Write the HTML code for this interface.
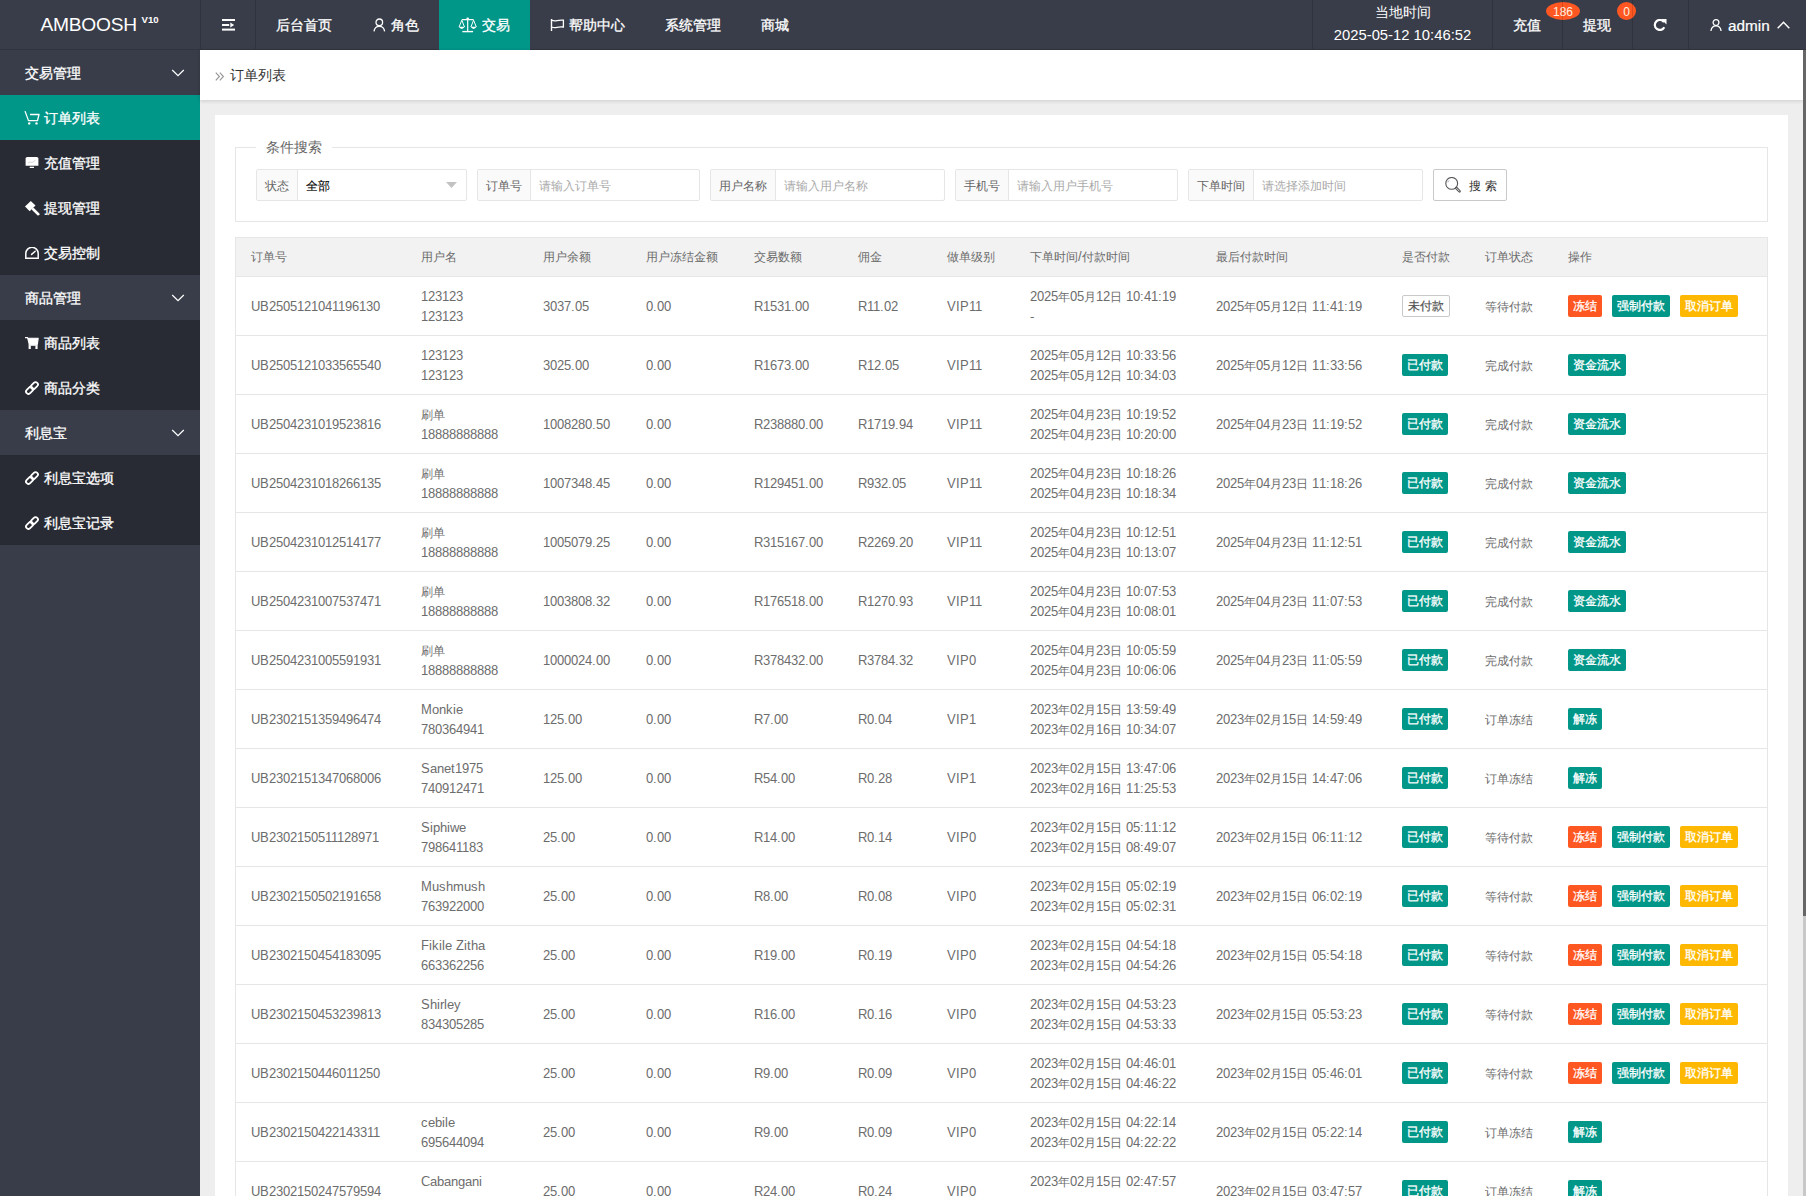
<!DOCTYPE html>
<html lang="zh"><head><meta charset="utf-8"><title>订单列表</title>
<style>
@font-face{font-family:"LSA";src:local("Liberation Sans"),local("LiberationSans");size-adjust:106%}
*{margin:0;padding:0;box-sizing:border-box}
html,body{width:1806px;height:1196px;overflow:hidden}
body{position:relative;background:#eeeeee;font-family:"LSA","Liberation Sans",sans-serif;font-size:14px;color:#666}
.abs{position:absolute;white-space:nowrap}
svg{display:block}
/* header */
.hd{position:absolute;left:0;top:0;width:1806px;height:50px;background:#393d49;border-bottom:1px solid #30343e}
.logo{position:absolute;left:0;top:0;width:200px;height:50px}
.logo .t{position:absolute;left:40.5px;top:12.5px;font-family:"Liberation Sans",sans-serif;font-size:19.2px;letter-spacing:-0.25px;color:#fff;line-height:24px}
.logo .v{position:absolute;left:141.5px;top:14px;font-family:"Liberation Sans",sans-serif;font-size:9.6px;font-weight:bold;color:#fff;line-height:11px}
.sep{position:absolute;top:0;width:1px;height:49px;background:rgba(0,0,0,.15);z-index:3}
.nv{position:absolute;top:0;height:50px;line-height:50px;color:#fff;font-size:14px;-webkit-text-stroke:0.3px #fff}
.nv.act{background:#009688}
.nv .ic{position:absolute;top:18px}
/* sidebar */
.sd{position:absolute;left:0;top:50px;width:200px;height:1146px;background:#393d49}
.it{position:absolute;left:0;width:200px;height:45px;line-height:46px;color:#fff;font-size:14px;-webkit-text-stroke:0.3px #fff}
.it.ch{background:#282b33;color:#fff}
.it.act{background:#009688;color:#fff}
.it .tx{position:absolute;left:25px;top:0}
.it.ch .tx{left:44px}
.it .ic{position:absolute;left:25px;top:15px}
.it .arr{position:absolute;left:171px;top:19px}
/* body */
.bc{position:absolute;left:200px;top:50px;width:1603px;height:50px;background:#fff;box-shadow:0 1px 4px rgba(0,0,0,.15)}
.bc .tx{position:absolute;left:30px;top:0;line-height:50px;color:#333;font-size:14px}
.bc .ic{position:absolute;left:15px;top:21px}
.card{position:absolute;left:215px;top:115px;width:1573px;height:1100px;background:#fff}
.fs{position:absolute;left:20px;top:32px;width:1533px;height:75px;border:1px solid #e6e6e6}
.lg{position:absolute;left:20px;top:-12px;padding:0 10px;background:#fff;font-size:14px;line-height:22px;color:#666}
.grp{position:absolute;top:54px;height:32px;border:1px solid #e6e6e6;border-radius:2px;background:#fff}
.grp .lb{position:absolute;left:0;top:0;height:30px;line-height:32px;padding:0 8px;background:#fafafa;border-right:1px solid #e6e6e6;color:#666;font-size:12px}
.grp .in{position:absolute;top:0;height:30px;line-height:32px;padding-left:8px;font-size:12px;color:#aaa}
.grp .in.v{color:#000;-webkit-text-stroke:0.1px #000}
.sbtn{position:absolute;left:1218px;top:54px;width:74px;height:32px;border:1px solid #c9c9c9;border-radius:2px;background:#fff;color:#333;font-size:12px;line-height:30px}
/* table */
.tb{position:absolute;left:21px;top:122px;width:1531px;border-collapse:collapse;table-layout:fixed;font-size:12px;color:#6c6c6c}
.tb th{height:39px;background:#f2f2f2;font-weight:normal;text-align:left;padding:0 15px;border:1px solid #e6e6e6;border-left:none;border-right:none;line-height:20px;white-space:nowrap}
.tb td{height:59px;padding:2px 15px 0 15px;border-bottom:1px solid #e6e6e6;line-height:20px;white-space:nowrap;vertical-align:middle}
.tbw{position:absolute;left:20px;top:122px;width:1533px;height:1200px;border-left:1px solid #e6e6e6;border-right:1px solid #e6e6e6}
.btn{display:inline-block;height:22px;line-height:22px;padding:0 5px;font-size:12px;color:#fff;border-radius:2px;vertical-align:middle;position:relative;top:-1px;-webkit-text-stroke:0.3px #fff}
.btn+.btn{margin-left:10px}
.bt{background:#009688}
.br{background:#ff5722}
.by{background:#ffb800}
.bo{background:#fff;border:1px solid #c9c9c9;color:#555;line-height:20px;-webkit-text-stroke:0.2px #555}
/* scrollbar */
.sb{position:absolute;left:1803px;top:50px;width:3px;height:1146px;background:#c8c8c8}
.sb .th{position:absolute;left:0;top:0;width:3px;height:866px;background:#666}
</style></head>
<body>
<!-- HEADER -->
<div class="hd">
  <div class="logo"><span class="t">AMBOOSH</span><span class="v">V10</span></div>
  <div class="sep" style="left:200px"></div>
  <div class="sep" style="left:255px"></div>
  <div class="abs" style="left:222px;top:19px">
    <svg width="14" height="12" viewBox="0 0 14 12"><rect x="0" y="0" width="13" height="2" fill="#fff"/><rect x="0" y="5" width="7.2" height="2" fill="#fff"/><path d="M8.3 3.6 L12.2 6 L8.3 8.4Z" fill="#fff"/><rect x="0" y="9.6" width="13" height="2" fill="#fff"/></svg>
  </div>
  <div class="nv" style="left:256px;width:96px;"><span class="abs" style="left:20px">后台首页</span></div>
  <div class="nv" style="left:352px;width:87px;">
    <svg class="ic" style="left:21px;top:18px" width="13" height="14" viewBox="0 0 13 14"><circle cx="6.3" cy="4.3" r="3.3" fill="none" stroke="#fff" stroke-width="1.3"/><path d="M1 13.4 C1.4 10.2 3.4 8.4 6.3 8.4 C9.2 8.4 11.2 10.2 11.6 13.4" fill="none" stroke="#fff" stroke-width="1.3"/></svg>
    <span class="abs" style="left:39px">角色</span></div>
  <div class="nv act" style="left:439px;width:91px;">
    <svg class="ic" style="left:19px;top:17px" width="19" height="16" viewBox="0 0 19 16"><circle cx="9.7" cy="1.8" r="1.3" fill="#fff"/><path d="M3.8 2.6 H15.6 M9.7 2 V14.5" stroke="#fff" stroke-width="1.2" fill="none"/><path d="M4.3 14.6 H15.1" stroke="#fff" stroke-width="1.4"/><path d="M3.8 3.2 L1.1 10 M3.8 3.2 L6.5 10 M15.6 3.2 L12.9 10 M15.6 3.2 L18.3 10" stroke="#fff" stroke-width="1" fill="none"/><path d="M0.7 9.8 H6.9 Q3.8 14 0.7 9.8Z M12.5 9.8 H18.7 Q15.6 14 12.5 9.8Z" fill="#fff"/></svg>
    <span class="abs" style="left:43px">交易</span></div>
  <div class="nv" style="left:530px;width:115px;">
    <svg class="ic" style="left:20px;top:19px" width="15" height="13" viewBox="0 0 15 13"><path d="M1.5 0 V12" stroke="#fff" stroke-width="1.4"/><path d="M1.5 1.2 Q4 2.3 7 1.6 Q10 0.9 13.4 1.2 V8 Q10 7.6 7 8.3 Q4 9 1.5 8" fill="none" stroke="#fff" stroke-width="1.3"/></svg>
    <span class="abs" style="left:39px">帮助中心</span></div>
  <div class="nv" style="left:645px;width:96px;"><span class="abs" style="left:20px">系统管理</span></div>
  <div class="nv" style="left:741px;width:68px;"><span class="abs" style="left:20px">商城</span></div>

  <div class="sep" style="left:1312px"></div>
  <div class="abs" style="left:1313px;top:0;width:179px;text-align:center;color:#fff;font-size:14px;line-height:24px">当地时间</div>
  <div class="abs" style="left:1313px;top:23px;width:179px;text-align:center;color:#fff;font-size:14.8px;line-height:24px;font-family:'Liberation Sans',sans-serif">2025-05-12 10:46:52</div>
  <div class="sep" style="left:1492px"></div>
  <div class="nv" style="left:1493px;width:69px;"><span class="abs" style="left:20px">充值</span></div>
  <div class="abs" style="left:1546px;top:2px;width:34px;height:18px;border-radius:50%;background:#ff5722;z-index:2;color:#fff2e0;font-family:'Liberation Sans',sans-serif;font-size:12px;line-height:20px;text-align:center">186</div>
  <div class="sep" style="left:1562px"></div>
  <div class="nv" style="left:1563px;width:69px;"><span class="abs" style="left:20px">提现</span></div>
  <div class="abs" style="left:1617px;top:2px;width:19px;height:18px;border-radius:50%;background:#ff5722;z-index:2;color:#fff2e0;font-family:'Liberation Sans',sans-serif;font-size:12px;line-height:20px;text-align:center">0</div>
  <div class="sep" style="left:1632px"></div>
  <div class="abs" style="left:1653px;top:19px">
    <svg width="14" height="12" viewBox="0 0 14 12"><path d="M11 3.2 A5 5 0 1 0 11.3 8.2" fill="none" stroke="#fff" stroke-width="2.2"/><path d="M8 0 L13.5 0 L13.5 5.5 Z" fill="#fff"/></svg>
  </div>
  <div class="sep" style="left:1688px"></div>
  <div class="abs" style="left:1710px;top:19px">
    <svg width="12" height="12" viewBox="0 0 12 12"><circle cx="6" cy="3.6" r="2.9" fill="none" stroke="#fff" stroke-width="1.3"/><path d="M0.9 12 C1.3 8.6 3.2 6.8 6 6.8 C8.8 6.8 10.7 8.6 11.1 12" fill="none" stroke="#fff" stroke-width="1.3"/></svg>
  </div>
  <div class="abs" style="left:1728px;top:0;line-height:51px;color:#fff;font-size:15.3px;font-family:'Liberation Sans',sans-serif;-webkit-text-stroke:0.2px #fff">admin</div>
  <div class="abs" style="left:1777px;top:21px">
    <svg width="13" height="8" viewBox="0 0 13 8"><path d="M0.7 7.3 L6.5 1.3 L12.3 7.3" fill="none" stroke="#fff" stroke-width="1.5"/></svg>
  </div>
</div>

<!-- SIDEBAR -->
<div class="sd">
  <div class="it" style="top:0"><span class="tx">交易管理</span><svg class="arr" width="14" height="8" viewBox="0 0 14 8"><path d="M1.2 1 L7 6.6 L12.8 1" fill="none" stroke="#fff" stroke-width="1.25"/></svg></div>
  <div class="it ch act" style="top:45px">
    <svg class="ic" style="left:24px;top:15px" width="16" height="16" viewBox="0 0 16 16"><path d="M1 1.1 L4.5 10.6 H13.5 L15 4.5 H6" fill="none" stroke="#fff" stroke-width="1.3" stroke-linejoin="round"/><circle cx="5.2" cy="13.4" r="1.2" fill="#fff"/><circle cx="12.5" cy="13.4" r="1.2" fill="#fff"/></svg>
    <span class="tx">订单列表</span></div>
  <div class="it ch" style="top:90px">
    <svg class="ic" style="top:17px" width="14" height="12" viewBox="0 0 14 12"><path d="M0.6 1.5 Q0.6 0 2.2 0 H11.8 Q13.4 0 13.4 1.5 V8.8 H0.6 Z" fill="#fff"/><path d="M3 6 L5 5 L7 5.5 L10.5 3.2" fill="none" stroke="#bbb" stroke-width="0.6"/><rect x="4.7" y="9.7" width="4.3" height="1.3" fill="#fff"/></svg>
    <span class="tx">充值管理</span></div>
  <div class="it ch" style="top:135px">
    <svg class="ic" style="top:16px" width="15" height="15" viewBox="0 0 15 15"><path d="M0 5.5 L5.8 0 L10.5 4.6 L4.7 10.2 Z" fill="#fff"/><path d="M8.2 8.2 L13.3 13.2" stroke="#fff" stroke-width="2.6" stroke-linecap="round"/></svg>
    <span class="tx">提现管理</span></div>
  <div class="it ch" style="top:180px">
    <svg class="ic" style="top:17px" width="14" height="13" viewBox="0 0 14 13"><path d="M0.8 11.2 V6.5 A6.2 6.2 0 0 1 13.2 6.5 V11.2 Z" fill="none" stroke="#fff" stroke-width="1.5"/><path d="M6.6 7.4 L10.2 4.3" stroke="#fff" stroke-width="1.5" stroke-linecap="round"/></svg>
    <span class="tx">交易控制</span></div>
  <div class="it" style="top:225px"><span class="tx">商品管理</span><svg class="arr" width="14" height="8" viewBox="0 0 14 8"><path d="M1.2 1 L7 6.6 L12.8 1" fill="none" stroke="#fff" stroke-width="1.25"/></svg></div>
  <div class="it ch" style="top:270px">
    <svg class="ic" style="top:17px" width="14" height="13" viewBox="0 0 14 13"><path d="M0 0.6 H2.6 L4.2 7.2 H12.4 L13.2 1.3 H2.6" fill="#fff" stroke="#fff" stroke-width="1.1" stroke-linejoin="round"/><rect x="3.6" y="7.2" width="9" height="1.6" fill="#fff"/><rect x="3.6" y="8.5" width="2.2" height="3.5" fill="#fff"/><rect x="10.4" y="8.5" width="2.2" height="3.5" fill="#fff"/></svg>
    <span class="tx">商品列表</span></div>
  <div class="it ch" style="top:315px">
    <svg class="ic" style="top:16px" width="14" height="14" viewBox="0 0 14 14"><rect x="7" y="0.6" width="4.8" height="8" rx="2.4" transform="rotate(45 9.4 4.6)" fill="none" stroke="#fff" stroke-width="1.8"/><rect x="2.2" y="5.4" width="4.8" height="8" rx="2.4" transform="rotate(45 4.6 9.4)" fill="none" stroke="#fff" stroke-width="1.8"/></svg>
    <span class="tx">商品分类</span></div>
  <div class="it" style="top:360px"><span class="tx">利息宝</span><svg class="arr" width="14" height="8" viewBox="0 0 14 8"><path d="M1.2 1 L7 6.6 L12.8 1" fill="none" stroke="#fff" stroke-width="1.25"/></svg></div>
  <div class="it ch" style="top:405px">
    <svg class="ic" style="top:16px" width="14" height="14" viewBox="0 0 14 14"><rect x="7" y="0.6" width="4.8" height="8" rx="2.4" transform="rotate(45 9.4 4.6)" fill="none" stroke="#fff" stroke-width="1.8"/><rect x="2.2" y="5.4" width="4.8" height="8" rx="2.4" transform="rotate(45 4.6 9.4)" fill="none" stroke="#fff" stroke-width="1.8"/></svg>
    <span class="tx">利息宝选项</span></div>
  <div class="it ch" style="top:450px">
    <svg class="ic" style="top:16px" width="14" height="14" viewBox="0 0 14 14"><rect x="7" y="0.6" width="4.8" height="8" rx="2.4" transform="rotate(45 9.4 4.6)" fill="none" stroke="#fff" stroke-width="1.8"/><rect x="2.2" y="5.4" width="4.8" height="8" rx="2.4" transform="rotate(45 4.6 9.4)" fill="none" stroke="#fff" stroke-width="1.8"/></svg>
    <span class="tx">利息宝记录</span></div>
</div>

<!-- BREADCRUMB -->
<div class="bc">
  <svg class="ic" style="top:22px" width="10" height="9" viewBox="0 0 10 9"><path d="M0.8 0.6 L4.4 4.5 L0.8 8.4 M4.8 0.6 L8.4 4.5 L4.8 8.4" fill="none" stroke="#999" stroke-width="1.2"/></svg>
  <span class="tx">订单列表</span>
</div>

<!-- CARD -->
<div class="card">
  <div class="fs"><span class="lg">条件搜索</span></div>
  <div class="grp" style="left:41px;width:211px"><span class="lb">状态</span><span class="in v" style="left:41px">全部</span>
    <svg class="abs" style="left:189px;top:12px" width="11" height="6" viewBox="0 0 11 6"><path d="M0 0 H11 L5.5 6Z" fill="#c2c2c2"/></svg></div>
  <div class="grp" style="left:262px;width:223px"><span class="lb">订单号</span><span class="in" style="left:53px">请输入订单号</span></div>
  <div class="grp" style="left:495px;width:235px"><span class="lb">用户名称</span><span class="in" style="left:65px">请输入用户名称</span></div>
  <div class="grp" style="left:740px;width:223px"><span class="lb">手机号</span><span class="in" style="left:53px">请输入用户手机号</span></div>
  <div class="grp" style="left:973px;width:235px"><span class="lb">下单时间</span><span class="in" style="left:65px">请选择添加时间</span></div>
  <div class="sbtn">
    <svg class="abs" style="left:11px;top:7px" width="17" height="17" viewBox="0 0 17 17"><circle cx="6.7" cy="6.4" r="5.9" fill="none" stroke="#555" stroke-width="1.1"/><path d="M2.9 5.2 Q3.2 4.2 3.9 3.6" fill="none" stroke="#669" stroke-width="0.7"/><path d="M11.3 11 L14.6 14.4" stroke="#555" stroke-width="2.6" stroke-linecap="round"/><path d="M11.6 11.3 L14.3 14.1" stroke="#fff" stroke-width="0.8" stroke-linecap="round"/></svg>
    <span class="abs" style="left:35px;top:1px">搜&nbsp;索</span>
  </div>
  <div class="tbw"></div>
  <table class="tb">
    <colgroup><col style="width:170px"><col style="width:122px"><col style="width:103px"><col style="width:108px"><col style="width:104px"><col style="width:89px"><col style="width:83px"><col style="width:186px"><col style="width:186px"><col style="width:83px"><col style="width:83px"><col style="width:214px"></colgroup>
    <thead><tr><th>订单号</th><th>用户名</th><th>用户余额</th><th>用户冻结金额</th><th>交易数额</th><th>佣金</th><th>做单级别</th><th>下单时间/付款时间</th><th>最后付款时间</th><th>是否付款</th><th>订单状态</th><th>操作</th></tr></thead>
    <tbody>
<tr><td>UB2505121041196130</td><td>123123<br>123123</td><td>3037.05</td><td>0.00</td><td>R1531.00</td><td>R11.02</td><td>VIP11</td><td>2025年05月12日 10:41:19<br>-</td><td>2025年05月12日 11:41:19</td><td><span class="btn bo">未付款</span></td><td>等待付款</td><td class="op"><span class="btn br">冻结</span><span class="btn bt">强制付款</span><span class="btn by">取消订单</span></td></tr>
<tr><td>UB2505121033565540</td><td>123123<br>123123</td><td>3025.00</td><td>0.00</td><td>R1673.00</td><td>R12.05</td><td>VIP11</td><td>2025年05月12日 10:33:56<br>2025年05月12日 10:34:03</td><td>2025年05月12日 11:33:56</td><td><span class="btn bt">已付款</span></td><td>完成付款</td><td class="op"><span class="btn bt">资金流水</span></td></tr>
<tr><td>UB2504231019523816</td><td>刷单<br>18888888888</td><td>1008280.50</td><td>0.00</td><td>R238880.00</td><td>R1719.94</td><td>VIP11</td><td>2025年04月23日 10:19:52<br>2025年04月23日 10:20:00</td><td>2025年04月23日 11:19:52</td><td><span class="btn bt">已付款</span></td><td>完成付款</td><td class="op"><span class="btn bt">资金流水</span></td></tr>
<tr><td>UB2504231018266135</td><td>刷单<br>18888888888</td><td>1007348.45</td><td>0.00</td><td>R129451.00</td><td>R932.05</td><td>VIP11</td><td>2025年04月23日 10:18:26<br>2025年04月23日 10:18:34</td><td>2025年04月23日 11:18:26</td><td><span class="btn bt">已付款</span></td><td>完成付款</td><td class="op"><span class="btn bt">资金流水</span></td></tr>
<tr><td>UB2504231012514177</td><td>刷单<br>18888888888</td><td>1005079.25</td><td>0.00</td><td>R315167.00</td><td>R2269.20</td><td>VIP11</td><td>2025年04月23日 10:12:51<br>2025年04月23日 10:13:07</td><td>2025年04月23日 11:12:51</td><td><span class="btn bt">已付款</span></td><td>完成付款</td><td class="op"><span class="btn bt">资金流水</span></td></tr>
<tr><td>UB2504231007537471</td><td>刷单<br>18888888888</td><td>1003808.32</td><td>0.00</td><td>R176518.00</td><td>R1270.93</td><td>VIP11</td><td>2025年04月23日 10:07:53<br>2025年04月23日 10:08:01</td><td>2025年04月23日 11:07:53</td><td><span class="btn bt">已付款</span></td><td>完成付款</td><td class="op"><span class="btn bt">资金流水</span></td></tr>
<tr><td>UB2504231005591931</td><td>刷单<br>18888888888</td><td>1000024.00</td><td>0.00</td><td>R378432.00</td><td>R3784.32</td><td>VIP0</td><td>2025年04月23日 10:05:59<br>2025年04月23日 10:06:06</td><td>2025年04月23日 11:05:59</td><td><span class="btn bt">已付款</span></td><td>完成付款</td><td class="op"><span class="btn bt">资金流水</span></td></tr>
<tr><td>UB2302151359496474</td><td>Monkie<br>780364941</td><td>125.00</td><td>0.00</td><td>R7.00</td><td>R0.04</td><td>VIP1</td><td>2023年02月15日 13:59:49<br>2023年02月16日 10:34:07</td><td>2023年02月15日 14:59:49</td><td><span class="btn bt">已付款</span></td><td>订单冻结</td><td class="op"><span class="btn bt">解冻</span></td></tr>
<tr><td>UB2302151347068006</td><td>Sanet1975<br>740912471</td><td>125.00</td><td>0.00</td><td>R54.00</td><td>R0.28</td><td>VIP1</td><td>2023年02月15日 13:47:06<br>2023年02月16日 11:25:53</td><td>2023年02月15日 14:47:06</td><td><span class="btn bt">已付款</span></td><td>订单冻结</td><td class="op"><span class="btn bt">解冻</span></td></tr>
<tr><td>UB2302150511128971</td><td>Siphiwe<br>798641183</td><td>25.00</td><td>0.00</td><td>R14.00</td><td>R0.14</td><td>VIP0</td><td>2023年02月15日 05:11:12<br>2023年02月15日 08:49:07</td><td>2023年02月15日 06:11:12</td><td><span class="btn bt">已付款</span></td><td>等待付款</td><td class="op"><span class="btn br">冻结</span><span class="btn bt">强制付款</span><span class="btn by">取消订单</span></td></tr>
<tr><td>UB2302150502191658</td><td>Mushmush<br>763922000</td><td>25.00</td><td>0.00</td><td>R8.00</td><td>R0.08</td><td>VIP0</td><td>2023年02月15日 05:02:19<br>2023年02月15日 05:02:31</td><td>2023年02月15日 06:02:19</td><td><span class="btn bt">已付款</span></td><td>等待付款</td><td class="op"><span class="btn br">冻结</span><span class="btn bt">强制付款</span><span class="btn by">取消订单</span></td></tr>
<tr><td>UB2302150454183095</td><td>Fikile Zitha<br>663362256</td><td>25.00</td><td>0.00</td><td>R19.00</td><td>R0.19</td><td>VIP0</td><td>2023年02月15日 04:54:18<br>2023年02月15日 04:54:26</td><td>2023年02月15日 05:54:18</td><td><span class="btn bt">已付款</span></td><td>等待付款</td><td class="op"><span class="btn br">冻结</span><span class="btn bt">强制付款</span><span class="btn by">取消订单</span></td></tr>
<tr><td>UB2302150453239813</td><td>Shirley<br>834305285</td><td>25.00</td><td>0.00</td><td>R16.00</td><td>R0.16</td><td>VIP0</td><td>2023年02月15日 04:53:23<br>2023年02月15日 04:53:33</td><td>2023年02月15日 05:53:23</td><td><span class="btn bt">已付款</span></td><td>等待付款</td><td class="op"><span class="btn br">冻结</span><span class="btn bt">强制付款</span><span class="btn by">取消订单</span></td></tr>
<tr><td>UB2302150446011250</td><td></td><td>25.00</td><td>0.00</td><td>R9.00</td><td>R0.09</td><td>VIP0</td><td>2023年02月15日 04:46:01<br>2023年02月15日 04:46:22</td><td>2023年02月15日 05:46:01</td><td><span class="btn bt">已付款</span></td><td>等待付款</td><td class="op"><span class="btn br">冻结</span><span class="btn bt">强制付款</span><span class="btn by">取消订单</span></td></tr>
<tr><td>UB2302150422143311</td><td>cebile<br>695644094</td><td>25.00</td><td>0.00</td><td>R9.00</td><td>R0.09</td><td>VIP0</td><td>2023年02月15日 04:22:14<br>2023年02月15日 04:22:22</td><td>2023年02月15日 05:22:14</td><td><span class="btn bt">已付款</span></td><td>订单冻结</td><td class="op"><span class="btn bt">解冻</span></td></tr>
<tr><td>UB2302150247579594</td><td>Cabangani<br>695644000</td><td>25.00</td><td>0.00</td><td>R24.00</td><td>R0.24</td><td>VIP0</td><td>2023年02月15日 02:47:57<br>2023年02月15日 02:48:10</td><td>2023年02月15日 03:47:57</td><td><span class="btn bt">已付款</span></td><td>订单冻结</td><td class="op"><span class="btn bt">解冻</span></td></tr>
    </tbody>
  </table>
</div>

<div class="sb"><div class="th"></div></div>
</body></html>
